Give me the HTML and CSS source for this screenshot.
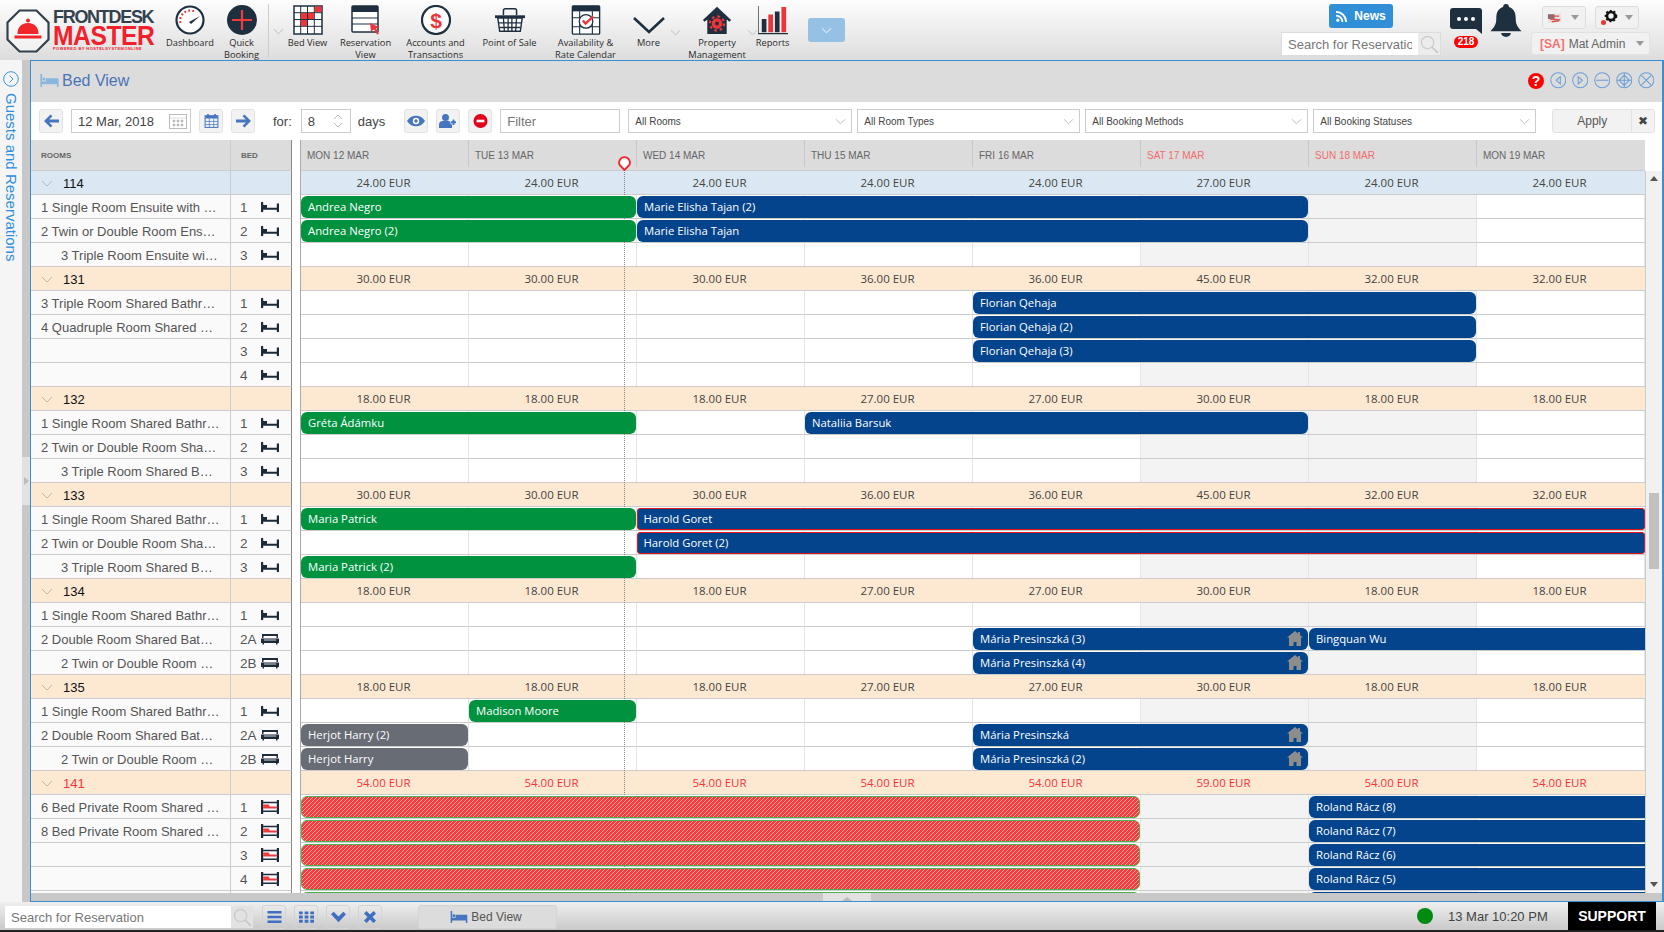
FILE: index.html
```html
<!DOCTYPE html>
<html lang="en">
<head>
<meta charset="utf-8">
<title>Bed View</title>
<link rel="stylesheet" href="styles.css">
</head>
<body>
<svg class="defs" width="0" height="0">
  <symbol id="bed" viewBox="0 0 18 12"><path d="M0 1h2.200v10H0zM15.800 2.500h2.200V11h-2.200zM2.200 4h3.800v2.800H15.800v2H2.200z" fill="#1c2a3a"/></symbol>
  <symbol id="dbed" viewBox="0 0 18 12"><path d="M1 5V1h16v4h-1.500V3H2.500v2zM0 5.500h18V10H16.500v1.500H15V10H3v1.500H1.500V10H0z" fill="#1c2a3a"/><path d="M3 7h12" stroke="#fff" stroke-width=".8"/></symbol>
  <symbol id="bunk" viewBox="0 0 18 14"><path d="M0 0h2.200v14H0zM15.800 0h2.200v14h-2.200zM2.200 1.800h13.600v1.400H2.200zM2.200 10.500h13.600v1.500H2.200z" fill="#1c2a3a"/><path d="M2.200 4.500h5.500l1 2h7.100V8.500H2.200z" fill="#f0393c"/></symbol>
  <symbol id="house" viewBox="0 0 16 15"><path d="M8 0l8 6.500h-2V15H9.500v-4h-3v4H2V6.500H0zM11 1h2v3l-2-1.600z" fill="#8d8d8d"/></symbol>
  <symbol id="chev" viewBox="0 0 12 7"><path d="M1 1l5 5 5-5" fill="none" stroke="#b8b8b8" stroke-width="1"/></symbol>
  <symbol id="search" viewBox="0 0 20 20"><circle cx="8" cy="8" r="6.500" fill="none" stroke="#c9c9c9" stroke-width="1.200"/><path d="M12.800 12.800l6 6" stroke="#c9c9c9" stroke-width="1.800"/></symbol>
  <symbol id="bedblue" viewBox="0 0 20 14"><path d="M0 0h2v8h4V4.500h12.500A1.500 1.500 0 0 1 20 6v8h-2v-3H2v3H0z" fill="currentColor"/><circle cx="4" cy="5.500" r="1.700" fill="currentColor"/></symbol>
</svg>

<header class="top">
  <div class="logo">
    <svg class="logo-mark" viewBox="0 0 46 46"><path d="M14.500 2.500h17l12 12v17l-12 12h-17l-12-12v-17z" fill="#fff" fill-opacity=".5" stroke="#33414e" stroke-width="2.200"/><path d="M12.500 26c0-7 4-11 10.500-11s10.500 4 10.500 11zM9.500 27.500h27v3h-27z" fill="#f0262b"/><circle cx="23" cy="12.500" r="2" fill="#f0262b"/></svg>
    <div class="logo-words">
      <div class="logo-a">FRONTDESK</div>
      <div class="logo-b">MASTER</div>
      <div class="logo-c">POWERED BY HOSTELSYSTEMONLINE</div>
    </div>
  </div>
  <nav class="nav">
    <div class="nav-item w-dash">
      <svg class="nav-icon" viewBox="0 0 30 30"><circle cx="15" cy="15" r="13.500" fill="#fff" stroke="#1e2f40" stroke-width="2.200"/><path d="M5.500 18a10 10 0 0 1 14-11.500" fill="none" stroke="#ee3438" stroke-width="2.200" stroke-dasharray="1.800 2.200"/><path d="M14 17l11-6-9 8z" fill="#1e2f40"/></svg>
      <span>Dashboard</span>
    </div>
    <div class="nav-item w-quick">
      <svg class="nav-icon" viewBox="0 0 30 30"><circle cx="15" cy="15" r="15" fill="#1e2f40"/><path d="M15 5v20M5 15h20" stroke="#f03c3f" stroke-width="2.200"/></svg>
      <span>Quick<br>Booking</span>
    </div>
    <div class="nav-sep"><svg class="chev-sm" viewBox="0 0 12 7"><use href="#chev"/></svg></div>
    <div class="nav-item w-bed">
      <svg class="nav-icon" viewBox="0 0 30 30"><rect x="1" y="1" width="28" height="28" fill="#fff" stroke="#1e2f40" stroke-width="1.500"/><path d="M7.700 1v28M14.500 1v28M21.300 1v28M1 7.700h28M1 14.500h28M1 21.300h28" stroke="#1e2f40" stroke-width="1"/><path d="M22 1.500h6.500V7H22zM8 8h6v6H8zM15 8h6v6h-6zM8 15h6v6H8z" fill="#ee3438"/></svg>
      <span>Bed View</span>
    </div>
    <div class="nav-item w-res">
      <svg class="nav-icon" viewBox="0 0 30 30"><rect x="1" y="1" width="26" height="26" fill="#fff" stroke="#1e2f40" stroke-width="1.500" rx="1"/><path d="M1 1h26v6H1z" fill="#1e2f40"/><path d="M1 13h26M1 19h26" stroke="#1e2f40" stroke-width="1.200"/><path d="M19 18l9 4-3 1.500 3 5-2 1-3-5-3 2z" fill="#ee3438"/></svg>
      <span>Reservation<br>View</span>
    </div>
    <div class="nav-item w-acc">
      <svg class="nav-icon" viewBox="0 0 30 30"><circle cx="15" cy="15" r="14" fill="#fff" stroke="#1e2f40" stroke-width="2.200"/><text x="15" y="22.500" text-anchor="middle" class="dollar">$</text></svg>
      <span>Accounts and<br>Transactions</span>
    </div>
    <div class="nav-item w-pos">
      <svg class="nav-icon" viewBox="0 0 32 30"><path d="M9 10V5a2 2 0 0 1 2-2h10a2 2 0 0 1 2 2v5" fill="none" stroke="#1e2f40" stroke-width="1.600"/><path d="M0 10h32v3H0z" fill="#1e2f40"/><path d="M3 13h26l-2 14H5z" fill="#fff" stroke="#1e2f40" stroke-width="1.500"/><path d="M9 13l1 14M14 13v14M18 13v14M23 13l-1 14M4 18h24M5 23h22" stroke="#1e2f40" stroke-width="1.400"/></svg>
      <span>Point of Sale</span>
    </div>
    <div class="nav-item w-av">
      <svg class="nav-icon" viewBox="0 0 32 33"><rect x="1" y="1" width="30" height="31" rx="1" fill="#fff" stroke="#1e2f40" stroke-width="1.500"/><path d="M1 1h30v6H1z" fill="#1e2f40"/><path d="M9 7v25M23 7v25M1 14h30M1 24h30" stroke="#1e2f40" stroke-width="1.200"/><circle cx="16" cy="18" r="7.500" fill="#fff" stroke="#1e2f40" stroke-width="1.400"/><path d="M12.500 17l3 3.500L24 12.500" fill="none" stroke="#ee3438" stroke-width="2.600"/></svg>
      <span>Availability &amp;<br>Rate Calendar</span>
    </div>
    <div class="nav-item w-more">
      <svg class="nav-icon more-icon" viewBox="0 0 34 20"><path d="M2 3l15 14L32 3" fill="none" stroke="#1e2f40" stroke-width="2.600"/></svg>
      <span>More</span>
    </div>
    <svg class="chev-sm nav-chev-a" viewBox="0 0 12 7"><use href="#chev"/></svg>
    <div class="nav-item w-prop">
      <svg class="nav-icon" viewBox="0 0 34 32"><path d="M17 1L1 16l2 2 3-2.500V32h22V15.500l3 2.500 2-2z" fill="#1e2f40"/><circle cx="17" cy="20" r="6" fill="#ee3438"/><circle cx="17" cy="20" r="8" fill="none" stroke="#ee3438" stroke-width="2.500" stroke-dasharray="3 3.300"/><circle cx="17" cy="20" r="2.200" fill="#1e2f40"/></svg>
      <span>Property<br>Management</span>
    </div>
    <svg class="chev-sm nav-chev-b" viewBox="0 0 12 7"><use href="#chev"/></svg>
    <div class="nav-item w-rep">
      <svg class="nav-icon" viewBox="0 0 32 30"><path d="M4 14h5v14H4zM18 6h5v22h-5z" fill="#1e2f40"/><path d="M11 9h5v19h-5zM25 1h5v27h-5z" fill="#ee3438"/><path d="M0 0v29.500h32" fill="none" stroke="#1e2f40" stroke-width="1.400"/></svg>
      <span>Reports</span>
    </div>
    <div class="nav-blue"><svg class="chev-w" viewBox="0 0 12 7"><path d="M1 1l5 5 5-5" fill="none" stroke="#fff" stroke-width="1"/></svg></div>
  </nav>
  <div class="top-right">
    <div class="tr-col-a">
      <div class="news">
        <svg class="rss" viewBox="0 0 12 12"><circle cx="2" cy="10" r="1.700" fill="#fff"/><path d="M0 5a7 7 0 0 1 7 7M0 1a11 11 0 0 1 11 11" fill="none" stroke="#fff" stroke-width="2"/></svg>
        News
      </div>
      <div class="top-search">
        <input class="top-search-input" placeholder="Search for Reservation">
        <svg class="search-ico" viewBox="0 0 20 20"><use href="#search"/></svg>
      </div>
    </div>
    <div class="tr-chat">
      <svg class="chat" viewBox="0 0 32 26"><path d="M3 0h26a3 3 0 0 1 3 3v23l-6-5H3a3 3 0 0 1-3-3V3a3 3 0 0 1 3-3z" fill="#1e2f40"/><circle cx="9" cy="11" r="2" fill="#fff"/><circle cx="16" cy="11" r="2" fill="#fff"/><circle cx="23" cy="11" r="2" fill="#fff"/></svg>
      <div class="badge">218</div>
    </div>
    <svg class="bell" viewBox="0 0 32 34"><path d="M16 0a3 3 0 0 1 3 3c6 2 7 7 7 12 0 6 2 9 6 13H0c4-4 6-7 6-13 0-5 1-10 7-12a3 3 0 0 1 3-3zM11 30h10a5 4 0 0 1-10 0z" fill="#1e2f40"/></svg>
    <div class="tr-col-b">
      <div class="tr-btns">
        <div class="mini-btn">
          <svg class="flag" viewBox="0 0 16 12"><path d="M1 2l14-1v9L1 11z" fill="#e8e3de"/><path d="M1 2l7 0v5H1z" fill="#7d6f78"/><path d="M4 4l9 0M3 7l11 1M5 10l8-1" stroke="#d8534f" stroke-width="1.500"/></svg>
          <i class="caret"></i>
        </div>
        <div class="mini-btn">
          <svg class="gear" viewBox="0 0 18 16"><circle cx="11" cy="6" r="4" fill="none" stroke="#111" stroke-width="2.600"/><circle cx="11" cy="6" r="5.500" fill="none" stroke="#111" stroke-width="1.600" stroke-dasharray="2 2"/><circle cx="3.500" cy="12.500" r="2.500" fill="#e33"/></svg>
          <i class="caret"></i>
        </div>
      </div>
      <div class="user-btn"><b>[SA]</b> Mat Admin <i class="caret"></i></div>
    </div>
  </div>
</header>

<div class="main">
  <aside class="side">
    <div class="side-tab">
      <svg class="side-ico" viewBox="0 0 16 16"><circle cx="8" cy="8" r="7.300" fill="none" stroke="#3d94d8"/><path d="M6.500 4.500L10 8l-3.500 3.500" fill="none" stroke="#3d94d8"/></svg>
      <div class="side-text">Guests and Reservations</div>
    </div>
    <div class="side-strip">
      <div class="side-handle"><i class="handle-arrow"></i></div>
    </div>
  </aside>

  <section class="win">
    <div class="win-title">
      <svg class="win-bed" viewBox="0 0 20 14"><use href="#bedblue"/></svg>
      <h1 class="win-name">Bed View</h1>
      <div class="win-ctrls">
        <span class="help">?</span>
        <svg class="ctl" viewBox="0 0 16 16"><circle cx="8" cy="8" r="7.300"/><path d="M10 4.500L6 8l4 3.500z"/></svg>
        <svg class="ctl" viewBox="0 0 16 16"><circle cx="8" cy="8" r="7.300"/><path d="M6 4.500L10 8l-4 3.500z"/></svg>
        <svg class="ctl" viewBox="0 0 16 16"><circle cx="8" cy="8" r="7.300"/><path d="M2 8h12"/></svg>
        <svg class="ctl" viewBox="0 0 16 16"><circle cx="8" cy="8" r="7.300"/><path d="M8 1v14M1 8h14M8 3l5 5-5 5-5-5z"/></svg>
        <svg class="ctl" viewBox="0 0 16 16"><circle cx="8" cy="8" r="7.300"/><path d="M3.500 3.500l9 9M12.500 3.500l-9 9"/></svg>
      </div>
    </div>

    <div class="tools">
      <div class="tbtn"><svg class="tico" viewBox="0 0 16 14"><path d="M7 0l2 2-3.500 3.500H16v3H5.500L9 12l-2 2-7-7z"/></svg></div>
      <div class="field date"><span>12 Mar, 2018</span>
        <svg class="cal-grey" viewBox="0 0 18 16"><rect x=".5" y="1.500" width="17" height="14" fill="#fff" stroke="#bbb"/><path d="M.5 5h17M4 7h2v2H4zM8 7h2v2H8zM12 7h2v2h-2zM4 11h2v2H4zM8 11h2v2H8zM12 11h2v2h-2z" fill="#bbb" stroke="#bbb" stroke-width=".5"/></svg>
      </div>
      <div class="tbtn"><svg class="tico" viewBox="0 0 16 16"><rect x=".7" y="2" width="14.600" height="13.300" fill="none" stroke="#4675c0" stroke-width="1.200"/><path d="M1 2h14v3H1zM3 0h2v3H3zM11 0h2v3h-2z"/><path d="M5.500 5v10M10.500 5v10M1 8.500h14M1 12h14" stroke="#4675c0" stroke-width=".8"/></svg></div>
      <div class="tbtn"><svg class="tico" viewBox="0 0 16 14"><path d="M9 0L7 2l3.500 3.500H0v3h10.500L7 12l2 2 7-7z"/></svg></div>
      <span class="lbl for">for:</span>
      <div class="field num"><span>8</span>
        <svg class="spin" viewBox="0 0 10 16"><path d="M1 6l4-4 4 4M1 10l4 4 4-4" fill="none" stroke="#b8b8b8"/></svg>
      </div>
      <span class="lbl lbl-days">days</span>
      <div class="tbtn eye"><svg class="tico wide" viewBox="0 0 18 12"><path d="M0 6c4-7 14-7 18 0-4 7-14 7-18 0z"/><circle cx="9" cy="6" r="3.200" fill="#fff"/><circle cx="9" cy="6" r="1.700"/></svg></div>
      <div class="tbtn"><svg class="tico wide" viewBox="0 0 18 14"><circle cx="6.500" cy="3.500" r="3.500"/><path d="M0 14v-3a4 4 0 0 1 4-4h5a4 4 0 0 1 4 4v3z"/><path d="M14.500 5v6M11.500 8h6" stroke="#fff" stroke-width="3.500"/><path d="M14.500 5.500v5.500M12 8.200h5" stroke="#4675c0" stroke-width="2"/></svg></div>
      <div class="tbtn"><svg class="tico" viewBox="0 0 16 16"><circle cx="8" cy="8" r="8" fill="#e2001a"/><path d="M3.500 6.500h9v3h-9z" fill="#fff"/></svg></div>
      <input class="filter" placeholder="Filter">
      <div class="sel s-rooms">All Rooms<svg class="sel-chev" viewBox="0 0 12 7"><use href="#chev"/></svg></div>
      <div class="sel s-next">All Room Types<svg class="sel-chev" viewBox="0 0 12 7"><use href="#chev"/></svg></div>
      <div class="sel s-next">All Booking Methods<svg class="sel-chev" viewBox="0 0 12 7"><use href="#chev"/></svg></div>
      <div class="sel s-next">All Booking Statuses<svg class="sel-chev" viewBox="0 0 12 7"><use href="#chev"/></svg></div>
      <div class="apply"><span class="apply-t">Apply</span><span class="apply-x">✖</span></div>
    </div>

    <div class="board">
      <div class="board-body">
        <div class="grid">
          <div class="today"><svg class="pin" viewBox="0 0 14 16"><path d="M7 15L1.800 9.500a5.800 5.800 0 1 1 10.400 0z" fill="#fff" stroke="#f2252d" stroke-width="2"/></svg></div>

          <div class="row head">
            <div class="c-room hd-room">ROOMS</div><div class="c-bed hd-bed">BED</div><div class="c-gap"></div>
            <div class="hd-days">
              <span>MON 12 MAR</span><span>TUE 13 MAR</span><span>WED 14 MAR</span><span>THU 15 MAR</span><span>FRI 16 MAR</span><span class="we">SAT 17 MAR</span><span class="we">SUN 18 MAR</span><span>MON 19 MAR</span>
            </div>
          </div>

          <div class="row grp blue">
            <div class="c-room"><svg class="g-chev" viewBox="0 0 12 7"><use href="#chev"/></svg>114</div><div class="c-bed"></div><div class="c-gap"></div>
            <div class="rates"><span>24.00 EUR</span><span>24.00 EUR</span><span>24.00 EUR</span><span>24.00 EUR</span><span>24.00 EUR</span><span>27.00 EUR</span><span>24.00 EUR</span><span>24.00 EUR</span></div>
          </div>
          <div class="row">
            <div class="c-room">1 Single Room Ensuite with …</div><div class="c-bed"><b>1</b><svg class="b-ico"><use href="#bed"/></svg></div><div class="c-gap"></div>
            <div class="days"><div class="bar green f1 t3">Andrea Negro</div><div class="bar navy f3 t7">Marie Elisha Tajan (2)</div></div>
          </div>
          <div class="row">
            <div class="c-room">2 Twin or Double Room Ens…</div><div class="c-bed"><b>2</b><svg class="b-ico"><use href="#bed"/></svg></div><div class="c-gap"></div>
            <div class="days"><div class="bar green f1 t3">Andrea Negro (2)</div><div class="bar navy f3 t7">Marie Elisha Tajan</div></div>
          </div>
          <div class="row">
            <div class="c-room ind">3 Triple Room Ensuite wi…</div><div class="c-bed"><b>3</b><svg class="b-ico"><use href="#bed"/></svg></div><div class="c-gap"></div>
            <div class="days"></div>
          </div>

          <div class="row grp">
            <div class="c-room"><svg class="g-chev" viewBox="0 0 12 7"><use href="#chev"/></svg>131</div><div class="c-bed"></div><div class="c-gap"></div>
            <div class="rates"><span>30.00 EUR</span><span>30.00 EUR</span><span>30.00 EUR</span><span>36.00 EUR</span><span>36.00 EUR</span><span>45.00 EUR</span><span>32.00 EUR</span><span>32.00 EUR</span></div>
          </div>
          <div class="row">
            <div class="c-room">3 Triple Room Shared Bathr…</div><div class="c-bed"><b>1</b><svg class="b-ico"><use href="#bed"/></svg></div><div class="c-gap"></div>
            <div class="days"><div class="bar navy f5 t8">Florian Qehaja</div></div>
          </div>
          <div class="row">
            <div class="c-room">4 Quadruple Room Shared …</div><div class="c-bed"><b>2</b><svg class="b-ico"><use href="#bed"/></svg></div><div class="c-gap"></div>
            <div class="days"><div class="bar navy f5 t8">Florian Qehaja (2)</div></div>
          </div>
          <div class="row">
            <div class="c-room"></div><div class="c-bed"><b>3</b><svg class="b-ico"><use href="#bed"/></svg></div><div class="c-gap"></div>
            <div class="days"><div class="bar navy f5 t8">Florian Qehaja (3)</div></div>
          </div>
          <div class="row">
            <div class="c-room"></div><div class="c-bed"><b>4</b><svg class="b-ico"><use href="#bed"/></svg></div><div class="c-gap"></div>
            <div class="days"></div>
          </div>

          <div class="row grp">
            <div class="c-room"><svg class="g-chev" viewBox="0 0 12 7"><use href="#chev"/></svg>132</div><div class="c-bed"></div><div class="c-gap"></div>
            <div class="rates"><span>18.00 EUR</span><span>18.00 EUR</span><span>18.00 EUR</span><span>27.00 EUR</span><span>27.00 EUR</span><span>30.00 EUR</span><span>18.00 EUR</span><span>18.00 EUR</span></div>
          </div>
          <div class="row">
            <div class="c-room">1 Single Room Shared Bathr…</div><div class="c-bed"><b>1</b><svg class="b-ico"><use href="#bed"/></svg></div><div class="c-gap"></div>
            <div class="days"><div class="bar green f1 t3">Gréta Ádámku</div><div class="bar navy f4 t7">Nataliia Barsuk</div></div>
          </div>
          <div class="row">
            <div class="c-room">2 Twin or Double Room Sha…</div><div class="c-bed"><b>2</b><svg class="b-ico"><use href="#bed"/></svg></div><div class="c-gap"></div>
            <div class="days"></div>
          </div>
          <div class="row">
            <div class="c-room ind">3 Triple Room Shared B…</div><div class="c-bed"><b>3</b><svg class="b-ico"><use href="#bed"/></svg></div><div class="c-gap"></div>
            <div class="days"></div>
          </div>

          <div class="row grp">
            <div class="c-room"><svg class="g-chev" viewBox="0 0 12 7"><use href="#chev"/></svg>133</div><div class="c-bed"></div><div class="c-gap"></div>
            <div class="rates"><span>30.00 EUR</span><span>30.00 EUR</span><span>30.00 EUR</span><span>36.00 EUR</span><span>36.00 EUR</span><span>45.00 EUR</span><span>32.00 EUR</span><span>32.00 EUR</span></div>
          </div>
          <div class="row">
            <div class="c-room">1 Single Room Shared Bathr…</div><div class="c-bed"><b>1</b><svg class="b-ico"><use href="#bed"/></svg></div><div class="c-gap"></div>
            <div class="days"><div class="bar green f1 t3">Maria Patrick</div><div class="bar navy flag-red f3 t9">Harold Goret</div></div>
          </div>
          <div class="row">
            <div class="c-room">2 Twin or Double Room Sha…</div><div class="c-bed"><b>2</b><svg class="b-ico"><use href="#bed"/></svg></div><div class="c-gap"></div>
            <div class="days"><div class="bar navy flag-red f3 t9">Harold Goret (2)</div></div>
          </div>
          <div class="row">
            <div class="c-room ind">3 Triple Room Shared B…</div><div class="c-bed"><b>3</b><svg class="b-ico"><use href="#bed"/></svg></div><div class="c-gap"></div>
            <div class="days"><div class="bar green f1 t3">Maria Patrick (2)</div></div>
          </div>

          <div class="row grp">
            <div class="c-room"><svg class="g-chev" viewBox="0 0 12 7"><use href="#chev"/></svg>134</div><div class="c-bed"></div><div class="c-gap"></div>
            <div class="rates"><span>18.00 EUR</span><span>18.00 EUR</span><span>18.00 EUR</span><span>27.00 EUR</span><span>27.00 EUR</span><span>30.00 EUR</span><span>18.00 EUR</span><span>18.00 EUR</span></div>
          </div>
          <div class="row">
            <div class="c-room">1 Single Room Shared Bathr…</div><div class="c-bed"><b>1</b><svg class="b-ico"><use href="#bed"/></svg></div><div class="c-gap"></div>
            <div class="days"></div>
          </div>
          <div class="row">
            <div class="c-room">2 Double Room Shared Bat…</div><div class="c-bed"><b>2A</b><svg class="b-ico"><use href="#dbed"/></svg></div><div class="c-gap"></div>
            <div class="days"><div class="bar navy f5 t7">Mária Presinszká (3)<svg class="h-ico"><use href="#house"/></svg></div><div class="bar navy f7 t9">Bingquan Wu</div></div>
          </div>
          <div class="row">
            <div class="c-room ind">2 Twin or Double Room …</div><div class="c-bed"><b>2B</b><svg class="b-ico"><use href="#dbed"/></svg></div><div class="c-gap"></div>
            <div class="days"><div class="bar navy f5 t7">Mária Presinszká (4)<svg class="h-ico"><use href="#house"/></svg></div></div>
          </div>

          <div class="row grp">
            <div class="c-room"><svg class="g-chev" viewBox="0 0 12 7"><use href="#chev"/></svg>135</div><div class="c-bed"></div><div class="c-gap"></div>
            <div class="rates"><span>18.00 EUR</span><span>18.00 EUR</span><span>18.00 EUR</span><span>27.00 EUR</span><span>27.00 EUR</span><span>30.00 EUR</span><span>18.00 EUR</span><span>18.00 EUR</span></div>
          </div>
          <div class="row">
            <div class="c-room">1 Single Room Shared Bathr…</div><div class="c-bed"><b>1</b><svg class="b-ico"><use href="#bed"/></svg></div><div class="c-gap"></div>
            <div class="days"><div class="bar green f2 t3">Madison Moore</div></div>
          </div>
          <div class="row">
            <div class="c-room">2 Double Room Shared Bat…</div><div class="c-bed"><b>2A</b><svg class="b-ico"><use href="#dbed"/></svg></div><div class="c-gap"></div>
            <div class="days"><div class="bar grey f1 t2">Herjot Harry (2)</div><div class="bar navy f5 t7">Mária Presinszká<svg class="h-ico"><use href="#house"/></svg></div></div>
          </div>
          <div class="row">
            <div class="c-room ind">2 Twin or Double Room …</div><div class="c-bed"><b>2B</b><svg class="b-ico"><use href="#dbed"/></svg></div><div class="c-gap"></div>
            <div class="days"><div class="bar grey f1 t2">Herjot Harry</div><div class="bar navy f5 t7">Mária Presinszká (2)<svg class="h-ico"><use href="#house"/></svg></div></div>
          </div>

          <div class="row grp red">
            <div class="c-room"><svg class="g-chev" viewBox="0 0 12 7"><use href="#chev"/></svg>141</div><div class="c-bed"></div><div class="c-gap"></div>
            <div class="rates"><span>54.00 EUR</span><span>54.00 EUR</span><span>54.00 EUR</span><span>54.00 EUR</span><span>54.00 EUR</span><span>59.00 EUR</span><span>54.00 EUR</span><span>54.00 EUR</span></div>
          </div>
          <div class="row">
            <div class="c-room">6 Bed Private Room Shared …</div><div class="c-bed"><b>1</b><svg class="b-ico bunk"><use href="#bunk"/></svg></div><div class="c-gap"></div>
            <div class="days"><div class="bar hatch f1 t6"></div><div class="bar navy f7 t9">Roland Rácz (8)</div></div>
          </div>
          <div class="row">
            <div class="c-room">8 Bed Private Room Shared …</div><div class="c-bed"><b>2</b><svg class="b-ico bunk"><use href="#bunk"/></svg></div><div class="c-gap"></div>
            <div class="days"><div class="bar hatch f1 t6"></div><div class="bar navy f7 t9">Roland Rácz (7)</div></div>
          </div>
          <div class="row">
            <div class="c-room"></div><div class="c-bed"><b>3</b><svg class="b-ico bunk"><use href="#bunk"/></svg></div><div class="c-gap"></div>
            <div class="days"><div class="bar hatch f1 t6"></div><div class="bar navy f7 t9">Roland Rácz (6)</div></div>
          </div>
          <div class="row">
            <div class="c-room"></div><div class="c-bed"><b>4</b><svg class="b-ico bunk"><use href="#bunk"/></svg></div><div class="c-gap"></div>
            <div class="days"><div class="bar hatch f1 t6"></div><div class="bar navy f7 t9">Roland Rácz (5)</div></div>
          </div>
          <div class="row">
            <div class="c-room"></div><div class="c-bed"></div><div class="c-gap"></div>
            <div class="days"><div class="bar hatch f1 t6"></div><div class="bar navy f7 t9"></div></div>
          </div>
        </div>
        <div class="vscroll">
          <i class="up"></i>
          <div class="thumb"></div>
          <i class="down"></i>
        </div>
      </div>
      <div class="hscroll"><div class="h-handle"><i class="h-up"></i></div></div>
    </div>
  </section>
</div>

<footer class="foot">
  <div class="foot-search">
    <input class="foot-input" placeholder="Search for Reservation">
    <svg class="search-ico" viewBox="0 0 20 20"><use href="#search"/></svg>
  </div>
  <div class="fbtn first"><svg class="fico" viewBox="0 0 14 12"><path d="M0 0h14v2.400H0zM0 4.800h14v2.400H0zM0 9.600h14V12H0z"/></svg></div>
  <div class="fbtn"><svg class="fico" viewBox="0 0 16 12"><path d="M0 0h4v3H0zM6 0h4v3H6zM12 0h4v3h-4zM0 4.500h4v3H0zM6 4.500h4v3H6zM12 4.500h4v3h-4zM0 9h4v3H0zM6 9h4v3H6zM12 9h4v3h-4z"/></svg></div>
  <div class="fbtn"><svg class="fico" viewBox="0 0 14 10"><path d="M0 2.500L2.500 0 7 4.500 11.500 0 14 2.500 7 10z"/></svg></div>
  <div class="fbtn"><svg class="fico small" viewBox="0 0 12 12"><path d="M2.500 0L6 3.500 9.500 0 12 2.500 8.500 6 12 9.500 9.500 12 6 8.500 2.500 12 0 9.500 3.500 6 0 2.500z"/></svg></div>
  <div class="ftab"><svg class="ftab-ico" viewBox="0 0 20 14"><use href="#bedblue"/></svg>Bed View</div>
  <div class="foot-right">
    <i class="dot"></i>
    <span class="clock">13 Mar 10:20 PM</span>
    <div class="support">SUPPORT</div>
  </div>
</footer>
</body>
</html>
```
FILE: styles.css
```css
* { box-sizing: border-box; }
html, body { margin: 0; height: 932px; overflow: hidden; }
body { background: #f5f5f5; font-family: "Liberation Sans", Arial, sans-serif; color: #444; display: flex; flex-direction: column; }
i { display: block; }
.defs { display: block; height: 0; }

/* top bar */
.top { height: 60px; flex: none; display: flex; background: linear-gradient(#fdfdfd, #dddddd); }
.logo { width: 160px; flex: none; display: flex; padding: 8px 0 0 5px; }
.logo-mark { width: 46px; height: 46px; flex: none; }
.logo-words { margin-left: 2px; padding-top: 2px; white-space: nowrap; }
.logo-a { font-size: 18px; line-height: 15px; font-weight: 700; color: #33414e; letter-spacing: -1.300px; }
.logo-b { font-size: 28px; line-height: 21px; font-weight: 700; color: #f1202a; transform: scaleX(.88); transform-origin: 0 50%; letter-spacing: -.5px; }
.logo-c { font-size: 4px; line-height: 6px; color: #f1202a; font-weight: 700; letter-spacing: .45px; }

.nav { width: 700px; flex: none; display: flex; font-family: "Open Sans", sans-serif; }
.nav-item { flex: none; display: flex; flex-direction: column; align-items: center; text-align: center; font-size: 9.300px; line-height: 12px; color: #2a2a2a; padding-top: 5px; white-space: nowrap; }
.nav-item span { display: block; margin-top: 2px; }
.nav-icon { width: 30px; height: 30px; flex: none; }
.more-icon { height: 20px; margin: 10px 0 0; width: 34px; }
.w-dash { width: 60px; }
.w-quick { width: 42px; margin-left: .5px; }
.nav-sep { width: 16px; flex: none; margin-left: 5px; border-left: 1px solid #ccc; height: 54px; margin-top: 4px; display: flex; align-items: center; padding-left: 4px; }
.chev-sm { width: 11px; height: 7px; display: block; }
.w-bed { width: 44px; margin-left: 2px; }
.w-res { width: 56px; margin-left: 8px; }
.w-acc { width: 68px; margin-left: 8px; }
.w-pos { width: 60px; margin-left: 10px; }
.w-av { width: 66px; margin-left: 13px; }
.w-more { width: 40px; margin-left: 10px; }
.nav-chev-a { margin: 29px 0 0 1.600px; flex: none; }
.w-prop { width: 70px; margin-left: 1px; }
.nav-chev-b { margin: 29px 0 0 -5px; flex: none; }
.w-rep { width: 40px; margin-left: -5.500px; }
.nav-blue { width: 37px; height: 24px; margin: 18px 0 0 15px; background: #95c1e4; border-radius: 3px; flex: none; display: flex; align-items: center; justify-content: center; }
.chev-w { width: 11px; height: 7px; }
.dollar { font: 700 21px "Liberation Sans", sans-serif; fill: #ee3438; }

.top-right { flex: 1; display: flex; padding-left: 421px; }
.tr-col-a { width: 160px; flex: none; display: flex; flex-direction: column; align-items: center; padding-top: 4px; }
.news { width: 64px; height: 24px; background: #318fd8; color: #fff; border-radius: 3px; font-size: 12px; font-weight: 700; display: flex; align-items: center; justify-content: center; gap: 7px; }
.rss { width: 11px; height: 11px; }
.top-search { width: 160px; height: 24px; margin-top: 4px; display: flex; align-items: center; border: 1px solid #dcdcdc; background: #ececec; }
.top-search-input { width: 136px; height: 22px; border: 0; background: #fff; padding: 0 6px; font: 13px "Liberation Sans", sans-serif; outline: 0; }
.top-search-input::placeholder, .foot-input::placeholder, .filter::placeholder { color: #777; opacity: 1; }
.search-ico { width: 19px; height: 19px; margin-left: 2px; flex: none; }
.tr-chat { width: 32px; margin-left: 9px; flex: none; padding-top: 8px; display: flex; flex-direction: column; align-items: center; }
.chat { width: 32px; height: 26px; display: block; }
.badge { background: #f00; color: #fff; font-size: 10px; font-weight: 700; line-height: 12px; height: 12px; width: 24px; text-align: center; border-radius: 6px; margin-top: 2px; }
.bell { width: 32px; height: 33px; margin: 4px 0 0 8px; flex: none; }
.tr-col-b { width: 130px; flex: none; margin-left: 9px; padding-top: 6px; }
.tr-btns { display: flex; gap: 9px; padding-left: 11px; }
.mini-btn { width: 44px; height: 23px; border: 1px solid #ddd; border-radius: 3px; background: #f1f1f1; display: flex; align-items: center; gap: 9px; padding-left: 4px; }
.flag { width: 15px; height: 12px; }
.gear { width: 18px; height: 16px; }
.mini-btn .gear + .caret { margin-left: -2px; }
.caret { width: 0; height: 0; border: 4px solid transparent; border-top: 5px solid #999; border-bottom: 0; flex: none; }
.user-btn { margin-top: 3px; width: 119px; height: 23px; border: 1px solid #e2e2e2; border-radius: 3px; background: #f1f1f1; font-size: 12px; color: #666; display: flex; align-items: center; padding-left: 8px; gap: 4px; white-space: nowrap; }
.user-btn b { color: #f57272; }
.user-btn .caret { margin-left: 7px; }

/* main */
.main { height: 842px; flex: none; display: flex; }
.side { width: 30px; flex: none; display: flex; }
.side-tab { width: 22px; padding-top: 11px; display: flex; flex-direction: column; align-items: center; }
.side-ico { width: 16px; height: 16px; flex: none; }
.side-text { writing-mode: vertical-rl; font-size: 15px; color: #2f8fdc; margin-top: 6px; white-space: nowrap; }
.side-strip { width: 8px; background: #c8c8c8; padding-top: 397px; }
.side-handle { height: 48px; background: #e2e2e2; display: flex; align-items: center; justify-content: center; }
.handle-arrow { border: 4px solid transparent; border-left: 5px solid #bbb; border-right: 0; }

.win { flex: 1; min-width: 0; border: 1px solid #3a8fd3; border-width: 1px 2px 1px 1px; display: flex; flex-direction: column; background: #fff; }
.win-title { height: 41px; flex: none; background: #dcdcdc; display: flex; align-items: center; padding: 0 0 2px 9px; }
.win-bed { width: 19px; height: 13px; color: #87b6de; flex: none; }
.win-name { margin: 0 0 0 3px; font-size: 16px; font-weight: 400; color: #4a73b9; }
.win-ctrls { margin-left: auto; display: flex; align-items: center; gap: 5.500px; padding-right: 8px; }
.help { width: 16px; height: 16px; border-radius: 50%; background: #f00; color: #fff; font-weight: 700; font-size: 14px; line-height: 16px; text-align: center; }
.ctl { width: 16.500px; height: 16.500px; }
.ctl circle, .ctl path { fill: none; stroke: #6a9fd6; stroke-width: 1; }

.tools { height: 38px; flex: none; display: flex; align-items: center; padding: 0 0 0 8px; gap: 8px; }
.tbtn { width: 24px; height: 24px; flex: none; border: 1px solid #e2e2e2; border-radius: 3px; background: #f2f2f2; display: flex; align-items: center; justify-content: center; }
.tico { width: 15px; height: 14px; fill: #4675c0; }
.tico.wide { width: 18px; }
.field { height: 24px; flex: none; border: 1px solid #ccc; background: #fff; display: flex; align-items: center; font-size: 13px; color: #444; padding: 0 6px; }
.date { width: 120px; justify-content: space-between; padding-right: 3px; }
.cal-grey { width: 18px; height: 16px; }
.lbl { font-size: 13px; color: #444; flex: none; }
.for { margin-left: 10px; }
.lbl-days { margin-left: -1px; }
.num { width: 50px; justify-content: space-between; margin-left: 1px; }
.spin { width: 10px; height: 16px; margin-right: 1px; }
.eye { margin-left: 11px; }
.filter { width: 120px; height: 24px; flex: none; border: 1px solid #ccc; padding: 0 6px; font: 13px "Liberation Sans", sans-serif; outline: 0; }
.sel { width: 224px; height: 24px; flex: none; border: 1px solid #ccc; display: flex; align-items: center; justify-content: space-between; font-size: 10px; color: #444; padding: 0 5px 0 6px; background: #fff; }
.s-next { margin-left: -3px; width: 223px; }
.sel-chev { width: 11px; height: 7px; }
.apply { margin-left: 8px; width: 103px; height: 24px; flex: none; border: 1px solid #e2e2e2; border-radius: 3px; background: #f2f2f2; display: flex; align-items: center; font-size: 12px; color: #555; }
.apply-t { width: 79px; text-align: center; border-right: 1px solid #e2e2e2; line-height: 22px; }
.apply-x { flex: 1; text-align: center; font-size: 12px; color: #444; }

.board { flex: 1; min-height: 0; display: flex; flex-direction: column; }
.board-body { flex: 1; min-height: 0; display: flex; overflow: hidden; }
.grid { width: 1614px; flex: none; position: relative; }
.row { display: flex; height: 24px; }
.c-room { width: 200px; flex: none; background: #fafafa; border-right: 1px solid #ccc; border-bottom: 1px solid #ccc; padding: 1px 0 0 10px; font-size: 13px; color: #555; white-space: nowrap; overflow: hidden; display: flex; align-items: center; }
.c-room.ind { padding-left: 30px; }
.c-bed { width: 61px; flex: none; background: #fafafa; border-right: 1px solid #888; border-bottom: 1px solid #ccc; display: flex; align-items: center; padding: 1px 0 0 9px; font-size: 13.500px; color: #555; }
.c-bed b { font-weight: 400; width: 20px; flex: none; text-align: left; }
.b-ico { width: 18px; height: 12px; flex: none; margin-left: 1px; }
.b-ico.bunk { height: 14px; }
.c-gap { width: 9px; flex: none; background: #fff; border-right: 1px solid #aaa; }

.head { height: 31px; }
.head .c-room, .head .c-bed { background: #dcdcdc; font-size: 8px; font-weight: 700; color: #666; }
.hd-bed { padding-left: 10px; }
.hd-days { width: 1344px; flex: none; display: grid; grid-template-columns: repeat(8, 168px); background: #dcdcdc; border-bottom: 1px solid #ccc; font-size: 10px; color: #666; }
.hd-days span { padding: 10px 0 0 6px; border-right: 1px solid #c8c8c8; margin-bottom: 3px; }
.hd-days span:last-child { border-right: 0; }
.hd-days .we { color: #f26c6c; }

.grp .c-room, .grp .c-bed { background: #fde8d2; color: #111; }
.g-chev { width: 12px; height: 7px; margin: 0 10px 0 0; flex: none; }
.rates { width: 1344px; flex: none; display: grid; grid-template-columns: repeat(8, 168px); background: #fde8d2; border-bottom: 1px solid #ccc; font: 11.500px/24px "Open Sans", sans-serif; color: #444; text-align: center; }
.rates span { padding-right: 3px; }
.blue .c-room, .blue .c-bed, .blue .rates { background: #dbe8f3; }
.red .c-room, .red .rates { color: #f6343b; }

.days { width: 1344px; flex: none; height: 24px; display: grid; grid-template-columns: repeat(8, 168px); grid-template-rows: 22px; padding-top: 1px; border-bottom: 1px solid #ccc;
  background:
    repeating-linear-gradient(90deg, transparent 0 167px, #e4e4e4 167px 168px),
    linear-gradient(90deg, transparent 840px, #f3f3f3 840px 1176px, transparent 1176px),
    #fff; }
.bar { position: relative; z-index: 2; grid-row: 1; margin-right: 1px; height: 21.500px; border-radius: 6px; padding-left: 7px; color: #fff; font: 11.300px/21px "Open Sans", sans-serif; white-space: nowrap; display: flex; align-items: center; justify-content: space-between; }
.green { background: #00923f; }
.navy { background: #04448c; }
.grey { background: #686c75; }
.flag-red { border: 1.500px solid #e2131b; border-radius: 3px; padding-left: 5.500px; }
.hatch { border: 1px solid #4caf50; background: repeating-linear-gradient(135deg, #fb3a3c 0 1.900px, #f9a8a4 1.900px 2.8284px); }
.h-ico { width: 16px; height: 15px; margin-right: 5px; flex: none; }
.f1 { grid-column-start: 1; } .f2 { grid-column-start: 2; } .f3 { grid-column-start: 3; } .f4 { grid-column-start: 4; } .f5 { grid-column-start: 5; } .f7 { grid-column-start: 7; }
.t2 { grid-column-end: 2; } .t3 { grid-column-end: 3; } .t6 { grid-column-end: 6; } .t7 { grid-column-end: 7; } .t8 { grid-column-end: 8; } .t9 { grid-column-end: 9; }
.f7.t9 { margin-right: 0; border-radius: 6px 0 0 6px; }
.flag-red.t9 { margin-right: 0; }

.today { position: absolute; z-index: 1; left: 593px; top: 22px; bottom: 0; width: 1px; border-left: 1px dotted #888; }
.pin { position: absolute; left: -7px; top: -6px; width: 13px; height: 15px; }

.vscroll { flex: 1; background: #f1f1f1; border-left: 1px solid #ccc; margin-top: 31px; padding: 0 3px; display: flex; flex-direction: column; }
.up { border: 4px solid transparent; border-bottom: 5px solid #555; border-top: 0; margin: 5px auto 0; }
.thumb { height: 76px; background: #c1c1c1; margin-top: 312px; }
.down { border: 4px solid transparent; border-top: 5px solid #555; border-bottom: 0; margin: auto auto 6px; }
.hscroll { height: 8px; flex: none; background: #c8c8c8; padding-left: 792px; }
.h-handle { width: 48px; height: 8px; background: #e2e2e2; display: flex; justify-content: center; padding-top: 1px; }
.h-up { border: 5px solid transparent; border-bottom: 4px solid #bbb; border-top: 0; }

/* footer */
.foot { height: 30px; flex: none; display: flex; background: linear-gradient(#efefef, #c9c9c9); border-bottom: 2px solid #222; padding: 4px 0 0 5px; }
.foot-search { width: 248px; height: 22px; display: flex; align-items: center; flex: none; background: #e2e2e2; }
.foot-input { width: 226px; height: 22px; border: 0; background: #fff; padding: 0 6px; font: 13px "Liberation Sans", sans-serif; outline: 0; }
.fbtn { width: 24px; height: 24px; flex: none; margin-left: 8px; margin-top: -1px; border: 1px solid #d4d4d4; border-radius: 3px; display: flex; align-items: center; justify-content: center; }
.fbtn.first { margin-left: 9px; }
.fico { width: 15px; height: 12px; fill: #3f6fc0; }
.fico.small { width: 12px; }
.ftab { width: 139px; height: 24px; margin: -1px 0 0 36px; flex: none; border: 1px solid #d4d4d4; border-radius: 3px; background: #dcdcdc; display: flex; align-items: center; justify-content: center; gap: 3px; padding-right: 3px; font-size: 12px; color: #555; }
.ftab-ico { width: 18px; height: 12px; color: #4675c0; }
.foot-right { margin-left: auto; display: flex; align-items: center; height: 28px; margin-top: -4px; padding-right: 8px; }
.dot { width: 16px; height: 16px; border-radius: 50%; background: #008a10; }
.clock { font-size: 13px; color: #444; margin-left: 15px; width: 120px; }
.support { width: 88px; height: 28px; background: #000; color: #fff; font-size: 14px; font-weight: 700; display: flex; align-items: center; justify-content: center; }
```
